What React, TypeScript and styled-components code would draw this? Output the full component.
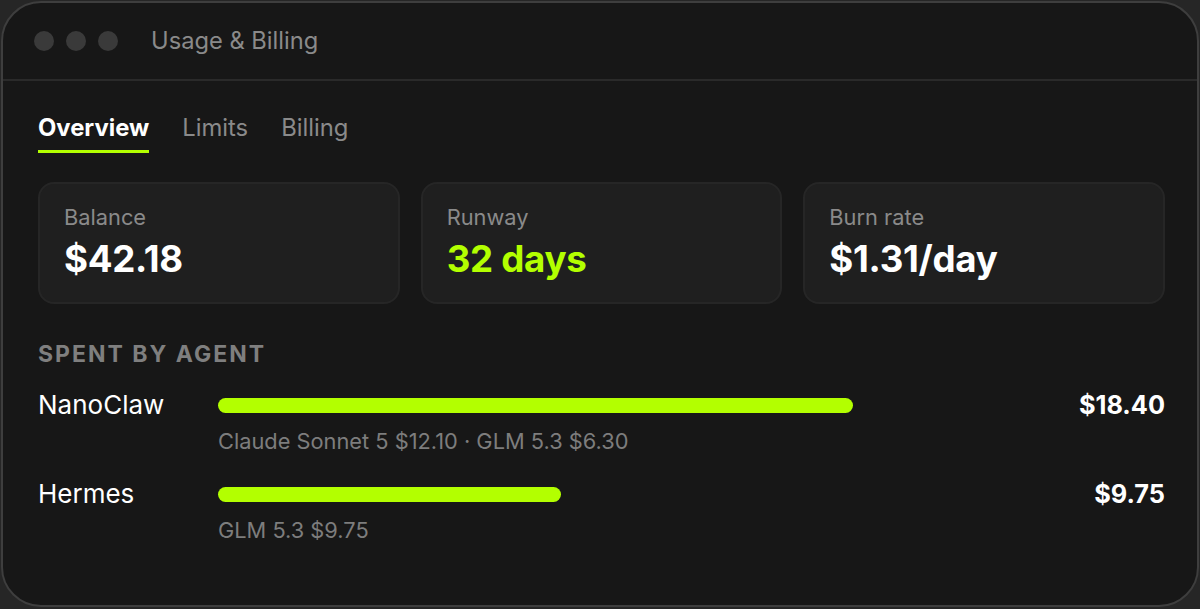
import styled, { createGlobalStyle } from 'styled-components';

const Global = createGlobalStyle`
  html, body {
    margin: 0;
    padding: 0;
    background: #262626;
    font-family: Inter, "Noto Sans", sans-serif;
  }
  * { box-sizing: border-box; }
`;

const Window = styled.div`
  margin: 1px;
  height: 606px;
  background: #171717;
  border: 2px solid #3e3e3e;
  border-radius: 40px;
  overflow: hidden;
  display: flex;
  flex-direction: column;
`;

const TitleBar = styled.div`
  height: 78px;
  flex-shrink: 0;
  display: flex;
  align-items: center;
  padding-left: 31px;
  border-bottom: 2px solid #2a2a2a;
`;

const Dots = styled.div`
  display: flex;
  gap: 12px;
  margin-right: 33px;
`;

const Dot = styled.span`
  width: 20px;
  height: 20px;
  border-radius: 50%;
  background: #3a3a3a;
`;

const Title = styled.div`
  font-size: 23.7px;
  line-height: 28px;
  color: #8a8a8a;
`;

const Body = styled.div`
  padding: 0 32px 0 35px;
`;

const Tabs = styled.div`
  display: flex;
  gap: 33px;
  margin-top: 32px;
`;

const Tab = styled.div<{ $active?: boolean }>`
  font-size: 23.8px;
  line-height: 29px;
  padding-bottom: 8px;
  border-bottom: 3px solid ${(p) => (p.$active ? '#b3ff00' : 'transparent')};
  color: ${(p) => (p.$active ? '#ffffff' : '#8a8a8a')};
  font-weight: ${(p) => (p.$active ? 700 : 400)};
`;

const Cards = styled.div`
  display: grid;
  grid-template-columns: repeat(3, 1fr);
  gap: 21px;
  margin-top: 29px;
`;

const Card = styled.div`
  background: #1f1f1f;
  border: 2px solid #262626;
  border-radius: 16px;
  padding: 21px 24px 23px;
`;

const CardLabel = styled.div`
  font-size: 21.8px;
  line-height: 24px;
  color: #8a8a8a;
`;

const CardValue = styled.div<{ $accent?: boolean }>`
  margin-top: 10px;
  font-size: 36.7px;
  line-height: 40px;
  font-weight: 700;
  letter-spacing: -0.3px;
  color: ${(p) => (p.$accent ? '#b3ff00' : '#ffffff')};
`;

const Heading = styled.div`
  margin-top: 38px;
  font-size: 23px;
  line-height: 24px;
  font-weight: 700;
  letter-spacing: 2px;
  color: #7f7f7f;
`;

const Agents = styled.div`
  margin-top: 26px;
  display: flex;
  flex-direction: column;
  gap: 28px;
`;

const Agent = styled.div`
  display: grid;
  grid-template-columns: 180px 1fr 120px;
  row-gap: 11px;
  align-items: center;
`;

const Name = styled.div`
  font-size: 26px;
  line-height: 26px;
  color: #ffffff;
`;

const Track = styled.div`
  height: 15px;
`;

const Bar = styled.div`
  height: 100%;
  border-radius: 8px;
  background: #b3ff00;
`;

const Amount = styled.div`
  font-size: 25.3px;
  line-height: 26px;
  font-weight: 700;
  color: #ffffff;
  text-align: right;
`;

const Detail = styled.div`
  grid-column: 2 / 4;
  font-size: 21.8px;
  line-height: 24px;
  color: #7d7d7d;
`;

const cards = [
  { label: 'Balance', value: '$42.18' },
  { label: 'Runway', value: '32 days', accent: true },
  { label: 'Burn rate', value: '$1.31/day' },
];

const agents = [
  { name: 'NanoClaw', amount: '$18.40', pct: 76.8, detail: 'Claude Sonnet 5 $12.10 · GLM 5.3 $6.30' },
  { name: 'Hermes', amount: '$9.75', pct: 41.5, detail: 'GLM 5.3 $9.75' },
];

export default function App() {
  return (
    <>
      <Global />
      <Window>
        <TitleBar>
          <Dots>
            <Dot />
            <Dot />
            <Dot />
          </Dots>
          <Title>Usage &amp; Billing</Title>
        </TitleBar>
        <Body>
          <Tabs>
            <Tab $active>Overview</Tab>
            <Tab>Limits</Tab>
            <Tab>Billing</Tab>
          </Tabs>
          <Cards>
            {cards.map((c) => (
              <Card key={c.label}>
                <CardLabel>{c.label}</CardLabel>
                <CardValue $accent={c.accent}>{c.value}</CardValue>
              </Card>
            ))}
          </Cards>
          <Heading>SPENT BY AGENT</Heading>
          <Agents>
            {agents.map((a) => (
              <Agent key={a.name}>
                <Name>{a.name}</Name>
                <Track>
                  <Bar style={{ width: `${a.pct}%` }} />
                </Track>
                <Amount>{a.amount}</Amount>
                <Detail>{a.detail}</Detail>
              </Agent>
            ))}
          </Agents>
        </Body>
      </Window>
    </>
  );
}
